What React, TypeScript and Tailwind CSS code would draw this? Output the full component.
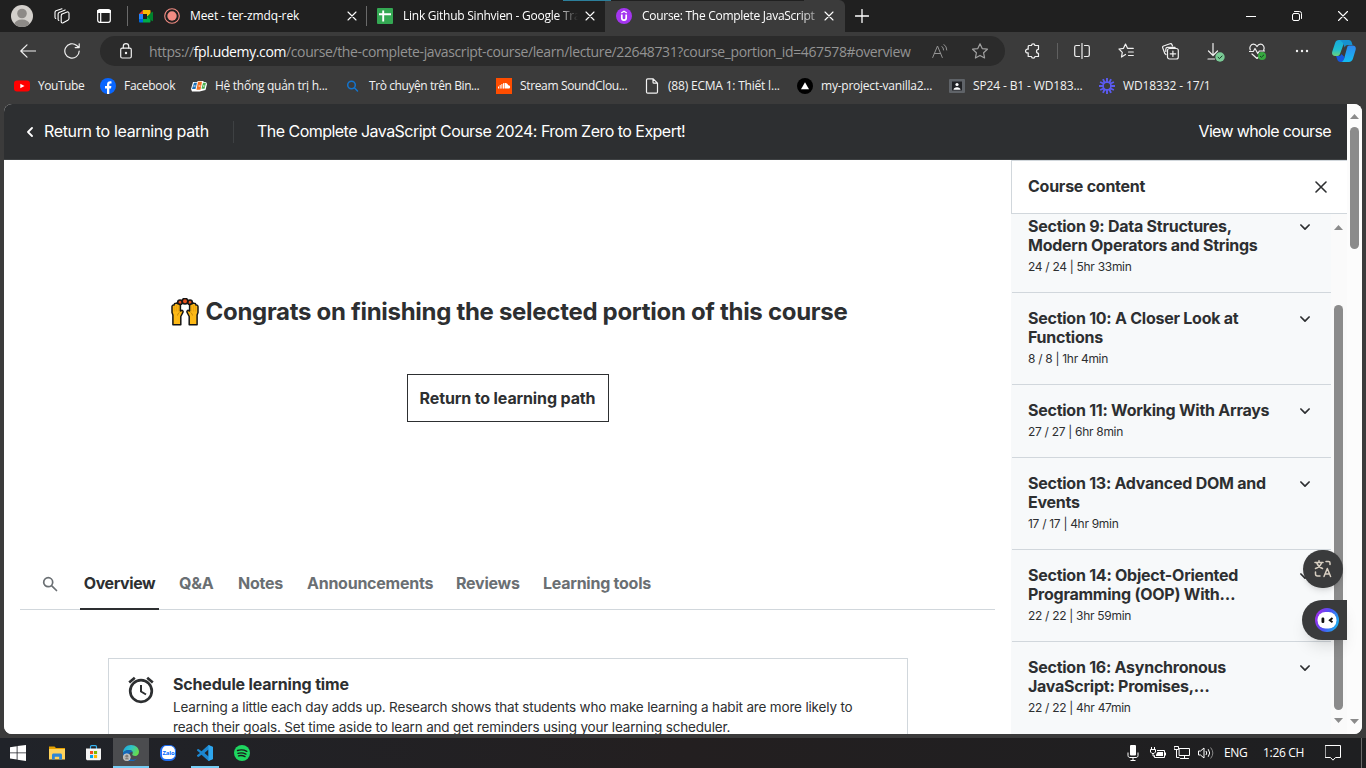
import React from "react";

type P = { children?: React.ReactNode; c?: string; w?: number; h?: number; sw?: number };

/* Stroked glyph in a 16 unit box, drawn at 16px unless told otherwise. */
function Line({ children, c = "", w = 16, h = 16, sw = 1 }: P) {
  return (
    <svg className={"shrink-0 " + c} width={w} height={h} viewBox={`0 0 ${w} ${h}`} fill="none" stroke="currentColor" strokeWidth={sw} strokeLinecap="round" strokeLinejoin="round">
      {children}
    </svg>
  );
}

function Solid({ children, c = "", w = 16, h = 16 }: P) {
  return (
    <svg className={"shrink-0 " + c} width={w} height={h} viewBox={`0 0 ${w} ${h}`}>
      {children}
    </svg>
  );
}

const Close = ({ c = "" }: { c?: string }) => (
  <Line w={10} h={10} c={c} sw={1.1}><path d="M1 1l8 8M9 1L1 9" /></Line>
);

function TabStrip() {
  return (
    <div className="relative flex h-8 shrink-0 items-center bg-[#202020] text-white">
      <Solid w={22} h={22} c="ml-[11px]">
        <defs><clipPath id="av"><circle cx="11" cy="11" r="11" /></clipPath></defs>
        <circle cx="11" cy="11" r="11" fill="#d3d0cc" />
        <g clipPath="url(#av)" fill="#8d8a87"><circle cx="11" cy="8.5" r="4.8" /><ellipse cx="11" cy="19" rx="7.6" ry="4.4" /></g>
      </Solid>
      <Line w={16} h={16} c="ml-[21px]" sw={1.1}>
        <path d="M7.5 6.2l5.6-2.2c1-.3 1.9.2 1.9 1.2v5.3c0 .8-.4 1.4-1.2 1.8l-4.6 2.5c-1 .5-2 0-2-1V7.900c0-.8.200-1.400.900-1.700z" />
        <path d="M4.800 12.500c-.5-.2-.7-.6-.7-1.200V6.200c0-.8.3-1.400 1-1.700l6-2.600" />
        <path d="M1.700 10.500c-.5-.2-.7-.6-.7-1.200V4.500c0-.8.3-1.400 1-1.700L8 .8" />
      </Line>
      <Line w={14} h={14} c="ml-[27px]" sw={1.2}>
        <rect x=".7" y=".7" width="12.600" height="12.600" rx="2" /><path d="M1 2.600h12" strokeWidth="3" /><path d="M3.700 4v9" />
      </Line>
      <div className="ml-4 h-5 w-px bg-[#6a6a6a]" />
      <Solid w={16} h={16} c="ml-[10px]">
        <path d="M1 6l4-4v4z" fill="#ea4335" /><path d="M5 2h6.500c.8 0 1 .4 1 1v4L9 9V6H5z" fill="#fbbc04" />
        <path d="M1 6h4v5H1z" fill="#2684fc" /><path d="M1 11h4v3.500H2.200C1.300 14.500 1 14 1 13.500z" fill="#0066da" />
        <path d="M5 11h4V8l3.500 2v3.500c0 .7-.3 1-1 1H5z" fill="#00ac47" /><path d="M9 8.500l5-4.500c.4-.3 1-.2 1 .4v8.200c0 .6-.5.700-1 .4z" fill="#00832d" />
        <path d="M5 6h4v5H5z" fill="#202020" />
      </Solid>
      <Solid w={16} h={16} c="ml-[10px]"><circle cx="8" cy="8" r="7.300" fill="none" stroke="#f28b82" strokeWidth="1.100" /><circle cx="8" cy="8" r="4.700" fill="#f28b82" /></Solid>
      <span className="ml-[10px] w-[157px] whitespace-nowrap text-xs tracking-[-0.13px]">Meet - ter-zmdq-rek</span>
      <Close />
      <div className="ml-[9px] h-5 w-px bg-[#6a6a6a]" />
      <Solid c="ml-[10px]"><rect width="16" height="16" rx="1" fill="#34a853" /><path d="M2 6.200h12M6.200 2.500v11" stroke="#fff" strokeWidth="1.900" /></Solid>
      <span className="ml-[10px] w-[175px] whitespace-nowrap text-xs tracking-[-0.25px] [mask-image:linear-gradient(to_right,black_88%,transparent)]">Link Github Sinhvien - Google Tra</span>
      <Close c="ml-[7px]" />
      <div className="ml-[10px] flex h-8 w-[240px] items-center rounded-tr-md bg-[#3b3b3b]">
        <Solid c="ml-[11px]"><circle cx="8" cy="8" r="8" fill="#a435f0" /><path d="M5.200 5L8 3.300 10.800 5" stroke="#fff" strokeWidth="1.300" fill="none" /><path d="M5.800 6.500v3.400a2.200 2.200 0 0 0 4.400 0V6.500" stroke="#fff" strokeWidth="1.700" fill="none" /></Solid>
        <span className="ml-[10px] w-[173px] whitespace-nowrap text-xs tracking-[-0.28px] [mask-image:linear-gradient(to_right,black_90%,#0007)]">Course: The Complete JavaScript</span>
        <Close c="ml-[9px]" />
      </div>
      <Line w={14} h={14} c="ml-[10px]" sw={1.300}><path d="M7 .5v13M.5 7h13" /></Line>
      <div className="ml-auto flex items-center pr-[18px]">
        <Line w={10} h={10}><path d="M0 5.500h10" /></Line>
        <Line w={10} h={10} c="ml-9"><rect x=".5" y="2.500" width="7" height="7" rx="1.500" /><path d="M2.500.5h5a2 2 0 0 1 2 2v5" /></Line>
        <Line w={10} h={10} c="ml-9" sw={1.100}><path d="M.5.5l9 9M9.500.5l-9 9" /></Line>
      </div>
      <div className="absolute left-[563px] top-0 h-px w-12 bg-[#2c7f9b]" />
      <div className="absolute left-[611px] top-0 h-px w-[193px] bg-[#202020]" />
    </div>
  );
}

function Toolbar() {
  return (
    <div className="flex h-9 shrink-0 items-center pt-0.5 text-[#f0f0f0]">
      <Line w={16} h={14} c="ml-5" sw={1.200}><path d="M15.500 7H.8M7 .8L.8 7 7 13.200" /></Line>
      <Line w={16} h={16} c="ml-7" sw={1.200}><path d="M15.200 8a7.200 7.200 0 1 1-2.500-5.500L14.600 4.200M15.200.8v3.800h-4" /></Line>
      <div className="ml-5 flex h-[30px] w-[905px] items-center rounded-full bg-[#2b2b2b]">
        <Line w={12} h={16} c="ml-5" sw={1.200}><rect x=".7" y="5.200" width="10.600" height="9.800" rx="1.500" /><path d="M3.300 5V3.300a2.700 2.700 0 0 1 5.400 0V5" /><circle cx="6" cy="10" r=".6" fill="currentColor" /></Line>
        <span className="ml-[17px] w-[766px] whitespace-nowrap text-[14px] tracking-[-0.38px] text-[#939393]">https://<span className="text-white">fpl.udemy.com</span>/course/the-complete-javascript-course/learn/lecture/22648731?course_portion_id=467578#overview</span>
        <Line w={16} h={16} c="ml-[17px] text-[#939393]"><path d="M.7 14.500L5.500 3l4.800 11.500M2.300 10.500h6.400M10 3.500q1.600 1.200 1.600 3.500M12 1.500q2.800 2 2.800 5.500" /></Line>
        <Line w={16} h={16} c="ml-6 text-[#a0a0a0]" sw={1.200}><path d="M8 .8l2.200 4.800 5.200.6-3.800 3.600 1 5.200L8 12.400 3.400 15l1-5.200L.6 6.200l5.200-.6z" /></Line>
      </div>
      <Line w={16} h={16} c="ml-[20px]" sw={1.200}><path d="M4.200 2.500h2.300a1.700 1.700 0 0 1 3.400 0h3.600v3.800a2 2 0 0 0 0 4v3.200H9.900a1.700 1.700 0 0 1-3.400 0H3.200v-3.700a1.900 1.900 0 1 1 0-3.500V3.500a1 1 0 0 1 1-1z" /></Line>
      <div className="ml-4 h-4 w-px bg-[#606060]" />
      <Line w={16} h={16} c="ml-4" sw={1.200}><path d="M5.500 2.500H2.200c-.8 0-1.500.6-1.500 1.400v8.200c0 .8.700 1.400 1.500 1.400h3.300M10.500 2.500h3.300c.8 0 1.500.6 1.500 1.400v8.200c0 .8-.7 1.400-1.500 1.400h-3.300M8 .5v15" /></Line>
      <Line w={16} h={16} c="ml-7" sw={1.200}><path d="M7.500 11.500L3.500 14l.8-4.700L1 6l4.500-.7L7.500 1l2 4.300h5.800M10.500 9h4.800M10.500 12.500h4.800" /></Line>
      <Line w={17} h={17} c="ml-7" sw={1.200}><path d="M4 11.500l-1.200-1L.7 4.800c-.3-.8.100-1.500.9-1.800L8 .8c.9-.3 1.700.1 2 .9l.5 1.300" /><path d="M3.800 8.500V6.200c0-1 .8-1.800 1.800-1.800h7.500" /><rect x="5.500" y="5.500" width="10.800" height="10.500" rx="2" /><path d="M10.900 8v5.500M8.200 10.800h5.500" /></Line>
      <div className="relative ml-7 h-[17px] w-4">
        <Line w={14} h={17} sw={1.200}><path d="M6 .5v12M1.500 8L6 12.500 10.500 8M1 16h6.500" /></Line>
        <Solid w={10} h={10} c="absolute left-[8px] top-[9px]"><circle cx="5" cy="5" r="4.700" fill="#7acb96" /><path d="M2.800 5l1.700 1.600L7.400 3.700" stroke="#173d25" fill="none" /></Solid>
      </div>
      <div className="relative ml-[26px] h-4 w-[18px]">
        <Line w={16} h={16} sw={1.200}><path d="M1.300 7C0 4 2 1.200 4.500 1.200 6.500 1.200 7.500 2.600 8 3.500c.5-.9 1.500-2.300 3.500-2.300C14 1.200 16 4 14.700 7M.5 8.500h3.800L6 5.500l2.800 5 1.500-2.500h5.200M3 11l5 4.500 1.500-1.500" /></Line>
        <Solid w={8} h={8} c="absolute left-[9px] top-[9px]"><circle cx="4" cy="4" r="4" fill="#37a83f" /><path d="M2 4l1.400 1.300L6 2.800" stroke="#173d25" fill="none" /></Solid>
      </div>
      <Solid w={14} h={4} c="ml-7"><g fill="#f3f3f3"><circle cx="2" cy="2" r="1.200" /><circle cx="7" cy="2" r="1.200" /><circle cx="12" cy="2" r="1.200" /></g></Solid>
      <Solid w={24} h={22} c="ml-[23px]">
        <defs>
          <linearGradient id="cp1" x1="0" y1="0" x2="0" y2="1"><stop offset="0" stopColor="#17a9dc" /><stop offset=".6" stopColor="#1fbfd0" /><stop offset="1" stopColor="#6bd37a" /></linearGradient>
          <linearGradient id="cp2" x1="0" y1="0" x2="0" y2="1"><stop offset="0" stopColor="#2f86ee" /><stop offset="1" stopColor="#12bdf0" /></linearGradient>
        </defs>
        <path d="M7 0h9l-4 3-4 11c-.5 1.300-1.300 2-2.500 2H3c-2.500 0-3.500-2-2.700-4.500L3 3.200C3.700 1.200 5 0 7 0z" fill="url(#cp1)" />
        <path d="M8 0h9c1.500 0 2.300 1 2.800 2.500L20.500 5H16c-2 0-2.700.8-3.300 2.500L11 3z" fill="#1791cf" />
        <path d="M17 5.500h3.500c2.700 0 3.800 2 3.100 4.500L21 18.500c-.7 2.200-2 3.500-4.200 3.500H8l4-3 3-11c.4-1.700 1-2.500 2-2.500z" fill="url(#cp2)" />
        <path d="M4 16h3c1.500 0 2-.8 2.500-2l3 3-1 3c-.5 1.500-1.600 2-3 2-1.800 0-2.700-1-3.200-2.500z" fill="#1557dd" />
      </Solid>
    </div>
  );
}

function Bookmark({ icon, text, w }: { icon: React.ReactNode; text: string; w: string }) {
  return (
    <div className="flex items-center gap-2">
      <span className="flex w-4 justify-center">{icon}</span>
      <span className={"whitespace-nowrap " + w}>{text}</span>
    </div>
  );
}

function Bookmarks() {
  return (
    <div className="flex h-9 shrink-0 items-center gap-4 pl-[14px] text-xs text-[#f2f2f2]">
      <Bookmark w="w-[46px] tracking-[-0.45px]" text="YouTube" icon={<Solid><rect y="2.500" width="16" height="11" rx="3" fill="#f00" /><path d="M6.300 5.700l4.200 2.300-4.200 2.300z" fill="#fff" /></Solid>} />
      <Bookmark w="w-[51px] tracking-[-0.28px]" text="Facebook" icon={<Solid><circle cx="8" cy="8" r="8" fill="#0866ff" /><path d="M7 16v-5.500H5V8h2V6.800C7 4.300 8.200 3.200 10.300 3.200c.5 0 .9.100 1.200.2v2.200h-1c-.9 0-1.200.4-1.200 1.300V8h2.100l-.4 2.500H9.300V16z" fill="#fff" /></Solid>} />
      <Bookmark w="w-[114px] tracking-[-0.28px]" text="Hệ thống quản trị h..." icon={<Solid><path d="M2 4h4l1-1h5l1 1h2l1 2-1.500 6-6 1.500H1L0 11z" fill="#fff" /><path d="M3 4.800h3L4.500 11H1z" fill="#1b70b8" /><path d="M7 3.800h4l-1.500 8H5.500z" fill="#f37021" /><path d="M12 4.800h3l-1.500 6H10.500z" fill="#4caf50" /><path d="M2.500 8h2M7.500 8h2M12 8h1.500" stroke="#fff" /></Solid>} />
      <Bookmark w="w-[111px] tracking-[-0.42px]" text="Trò chuyện trên Bin..." icon={<Line sw={1.500} c="text-[#1474cc]"><circle cx="6.500" cy="7" r="3.800" /><path d="M9.400 9.800L12.500 13" /></Line>} />
      <Bookmark w="w-[108px] tracking-[-0.35px]" text="Stream SoundClou..." icon={<Solid><rect width="16" height="16" fill="#ff4d00" /><path d="M2.500 8.500v2M4.200 7v3.600M5.900 6v4.600M7.500 5.200v5.400" stroke="#fff" /><path d="M8.500 5c2-.5 3.500.6 3.600 2.300 1.300-.2 2 .7 2 1.600 0 1-.7 1.700-1.600 1.700h-4z" fill="#fff" /></Solid>} />
      <Bookmark w="w-[113px] tracking-[-0.2px]" text="(88) ECMA 1: Thiết l..." icon={<Line sw={1.200} c="-ml-px"><path d="M2.500 2c0-.7.500-1.200 1.200-1.200h5.500l4.300 4.300v8.900c0 .7-.5 1.200-1.200 1.200H3.700c-.7 0-1.200-.5-1.200-1.200zM9 .8v3.400c0 .6.4 1 1 1h3.500" /></Line>} />
      <Bookmark w="w-[112px] tracking-[-0.23px]" text="my-project-vanilla2..." icon={<Solid><circle cx="8" cy="8" r="8" fill="#000" /><path d="M8 4.200l4 7H4z" fill="#fff" /></Solid>} />
      <Bookmark w="w-[110px] tracking-[-0.13px]" text="SP24 - B1 - WD183..." icon={<Solid><rect y="1" width="16" height="14" rx="1" fill="#5f6368" /><rect x="3" y="3.500" width="10" height="9" fill="#202124" /><circle cx="8" cy="6.500" r="1.600" fill="#fff" /><path d="M4.500 11.800c0-1.800 1.500-2.600 3.500-2.600s3.500.8 3.500 2.600z" fill="#fff" /></Solid>} />
      <Bookmark w="w-[90px] tracking-[-0.12px]" text="WD18332 - 17/1" icon={<Solid><g stroke="#5b5bf0" strokeWidth="1.900"><path d="M8 0v5M8 11v5M0 8h5M11 8h5M4 1.100l2 4.300M10 10.600l2 4.300M1.100 4l4.300 2M10.600 10l4.300 2M12 1.100l-2 4.300M6 10.600l-2 4.300M14.900 4l-4.300 2M5.400 10l-4.300 2" /></g><circle cx="8" cy="8" r="4" fill="none" stroke="#5b5bf0" strokeWidth="1.600" /></Solid>} />
    </div>
  );
}

const Arrow = ({ down = false, c = "" }: { down?: boolean; c?: string }) => (
  <Solid w={9} h={5} c={c}><path d={down ? "M0 0h9L4.500 5z" : "M0 5h9L4.500 0z"} fill="#8b8b8b" /></Solid>
);

function Header() {
  return (
    <header className="flex h-14 shrink-0 items-center border-b border-[#3e4143] bg-[#2d2f31] text-base text-white">
      <Line w={8} h={10} c="ml-[22px]" sw={1.800}><path d="M6 1L2 5l4 4" /></Line>
      <span className="ml-[10px] w-[189px] whitespace-nowrap pb-0.5 tracking-[-0.35px]">Return to learning path</span>
      <div className="h-[22px] w-px bg-[#3e4143]" />
      <span className="ml-[23px] whitespace-nowrap pb-0.5 tracking-[-0.53px]">The Complete JavaScript Course 2024: From Zero to Expert!</span>
      <span className="ml-auto mr-4 whitespace-nowrap pb-0.5 tracking-[-0.64px]">View whole course</span>
    </header>
  );
}

const tabs = [
  { t: "Q&A", w: "w-[35px]" },
  { t: "Notes", w: "w-[45px]" },
  { t: "Announcements", w: "w-[125px]" },
  { t: "Reviews", w: "w-[63px]" },
  { t: "Learning tools", w: "w-[109px]" },
];

function RaisedHands() {
  const hand = (
    <>
      <path d="M1.900 26.800V17L1 14.500V8.500Q1.300 6.700 3 7Q3.300 5.200 5 5.300Q6.500 4.700 7.300 6Q9.300 5.800 9.400 8V13L11.200 12.300Q12.800 13.200 11.600 15L9.800 18.500V26.800z" fill="#fdb916" stroke="#151515" strokeWidth="1.500" strokeLinejoin="round" />
      <path d="M3.300 8v5.500M5.300 7v6.500M7.300 7.500v6" stroke="#e39a0c" strokeWidth=".7" /><path d="M8.500 14.500q-1.800.8-2 3" stroke="#b97800" strokeWidth=".8" fill="none" />
    </>
  );
  return (
    <Solid w={28} h={28}>
      <g fill="#e8501c" stroke="#151515" strokeWidth="1.600"><circle cx="9" cy="4.300" r="2.300" /><circle cx="19" cy="4.300" r="2.300" /><circle cx="14" cy="3.200" r="2.800" /></g>
      <g>{hand}</g><g transform="translate(28 0) scale(-1 1)">{hand}</g>
    </Solid>
  );
}

function Main() {
  return (
    <main className="flex w-[1007px] shrink-0 flex-col overflow-hidden bg-white text-[#2d2f31]">
      <div className="flex h-[398px] shrink-0 flex-col items-center pt-[137px]">
        <h1 className="flex h-[30px] items-center whitespace-nowrap pl-[3px] text-2xl font-bold tracking-[-0.3px]">
          <RaisedHands /><span className="ml-[7px]">Congrats on finishing the selected portion of this course</span>
        </h1>
        <button className="mt-[47px] flex h-12 w-[202px] shrink-0 items-center justify-center whitespace-nowrap border border-[#2d2f31] text-base font-bold tracking-[-0.13px]">Return to learning path</button>
      </div>
      <nav className="mx-4 flex h-[52px] shrink-0 items-stretch gap-6 border-b border-[#d1d7dc] pl-[22px] text-base font-bold tracking-[-0.25px] text-[#6a6f73]">
        <div className="-mr-2 flex w-[22px] items-center"><Line w={16} h={16} sw={1.700}><circle cx="6.200" cy="6.200" r="4.500" /><path d="M9.800 9.800l4.700 4.700" /></Line></div>
        <div className="-mb-px -mr-1 flex w-[79px] items-center justify-center border-b-2 border-[#2d2f31] pb-px tracking-[-0.4px] text-[#2d2f31]">Overview</div>
        {tabs.map(({ t, w }) => <div key={t} className={"flex items-center whitespace-nowrap pb-0.5 " + w}>{t}</div>)}
      </nav>
      <section className="ml-[104px] mt-12 flex h-[160px] w-[800px] shrink-0 border border-[#d1d7dc] pl-[19px] pt-4">
        <Line w={28} h={30} sw={2.700}><circle cx="13" cy="16" r="10.800" /><path d="M13 10v6.500l5 3" strokeWidth="2" strokeLinecap="butt" /><path d="M1.200 7.500l5.600-4.700M24.800 7.500l-5.600-4.700" strokeLinecap="butt" /></Line>
        <div className="ml-[17px] whitespace-nowrap">
          <h2 className="h-[22px] text-base font-bold leading-[18px] tracking-[-0.17px]">Schedule learning time</h2>
          <p className="text-[13.5px] leading-5 tracking-[-0.17px]">Learning a little each day adds up. Research shows that students who make learning a habit are more likely to<br />reach their goals. Set time aside to learn and get reminders using your learning scheduler.</p>
        </div>
      </section>
    </main>
  );
}

const sections = [
  { t: ["Section 9: Data Structures,", "Modern Operators and Strings"], m: "24 / 24 | 5hr 33min" },
  { t: ["Section 10: A Closer Look at", "Functions"], m: "8 / 8 | 1hr 4min" },
  { t: ["Section 11: Working With Arrays"], m: "27 / 27 | 6hr 8min" },
  { t: ["Section 13: Advanced DOM and", "Events"], m: "17 / 17 | 4hr 9min" },
  { t: ["Section 14: Object-Oriented", "Programming (OOP) With…"], m: "22 / 22 | 3hr 59min" },
  { t: ["Section 16: Asynchronous", "JavaScript: Promises,…"], m: "22 / 22 | 4hr 47min" },
];

function Sidebar() {
  return (
    <aside className="flex min-w-0 flex-1 flex-col text-[#2d2f31]">
      <div className="flex h-[54px] shrink-0 items-center border border-r-0 border-[#d1d7dc] bg-white pl-4 pr-5">
        <h2 className="pb-0.5 text-base font-bold tracking-[-0.25px]">Course content</h2>
        <Line w={12} h={12} c="ml-auto" sw={1.600}><path d="M1 1l10 10M11 1L1 11" /></Line>
      </div>
      <div className="flex min-h-0 flex-1">
        <div className="w-80 overflow-hidden bg-[#f7f9fa]">
          <div className="-mt-[13px]">
            {sections.map((s) => (
              <div key={s.m} className={"ml-px flex border-b border-[#d1d7dc] pl-4 pr-[21px] pt-4 last:border-b-0 " + (s.t.length > 1 ? "h-[92px]" : "h-[73px]")}>
                <div className="flex-1 whitespace-nowrap">
                  <h3 className="text-base font-bold leading-[19.2px] tracking-[-0.25px]">{s.t.map((l) => <div key={l}>{l}</div>)}</h3>
                  <p className="pt-1 text-xs leading-[16.8px] tracking-[-0.3px]">{s.m}</p>
                </div>
                <Line w={10} h={8} c="mt-[7px]" sw={1.700}><path d="M.9 1L5 5.100 9.100 1" /></Line>
              </div>
            ))}
          </div>
        </div>
        <div className="flex w-4 flex-col items-start bg-[#fafafa] pl-[3px] pt-[11px]">
          <Arrow />
          <div className="mt-[75px] h-[405px] w-[9px] rounded-full bg-[#8b8b8b]" />
          <Arrow down c="mt-2" />
        </div>
      </div>
    </aside>
  );
}

function Taskbar() {
  return (
    <div className="flex h-[30px] shrink-0 items-center bg-linear-to-r from-[#202329] via-[#231f20] to-[#1e1f21] text-xs text-white">
      <Solid c="ml-[10px]"><path d="M0 2.200l6.700-1v6.300H0zM7.500 1L16 0v7.500H7.500zM0 8.300h6.700v6.300l-6.700-1zM7.500 8.300H16V16l-8.500-1.200z" fill="#fff" /></Solid>
      <Solid c="ml-[23px]"><path d="M0 1.500h5.500L7 3h9v5H0z" fill="#e5a100" /><path d="M0 4h16v10.500H0z" fill="#ffd35c" /><path d="M3 14.500V10c0-1 .6-1.600 1.600-1.600h6.800c1 0 1.600.6 1.600 1.600v4.500h-2.800v-2.700H5.800v2.700z" fill="#2f86d6" /></Solid>
      <Solid w={15} h={16} c="ml-[21px]"><path d="M4.500 4V1.700C4.500 1 5 .7 5.500.7h4c.6 0 1 .3 1 1V4" stroke="#35b2ef" strokeWidth="1.200" fill="none" /><path d="M0 3.500h15v10c0 1-.7 1.800-1.800 1.800H1.800C.7 15.300 0 14.500 0 13.500z" fill="#f4f4f4" /><path d="M4 6h3.100v3.100H4z" fill="#f25022" /><path d="M8 6h3.100v3.100H8z" fill="#7fba00" /><path d="M4 10h3.100v3.100H4z" fill="#00a4ef" /><path d="M8 10h3.100v3.100H8z" fill="#ffb900" /></Solid>
      <div className="ml-3 flex h-[30px] w-9 items-center justify-center border-b-2 border-[#76cdf5] bg-[#4b4c4f] pt-0.5">
        <Solid>
          <defs><linearGradient id="ed" x1="0" y1="0" x2="1" y2=".5"><stop offset="0" stopColor="#1c9de0" /><stop offset=".5" stopColor="#2fc4c9" /><stop offset="1" stopColor="#64dc50" /></linearGradient></defs>
          <path d="M0 8C0 3.500 3.500 0 8 0c4.800 0 8 3.200 8 6.800 0 2.600-1.700 4.200-3.800 4.200-1.700 0-3-.6-3-1.400 0-.5.600-.8.600-1.800C9.800 6.300 8.200 5 6 5 3 5 .8 6.500 0 8z" fill="url(#ed)" />
          <path d="M0 8C.8 6 3 5 6 5c1.800 0 3.200.9 3.600 2-1.900-.3-4 1-4 3.700 0 2.300 2 4 4.600 4 1.600 0 3-.5 4-1.400A8 8 0 0 1 0 8z" fill="#1567b8" />
          <circle cx="3.800" cy="12.200" r="3.500" fill="#b5b3b0" stroke="#e4e2df" strokeWidth=".6" /><circle cx="3.800" cy="11.200" r="1.400" fill="#807d7a" /><path d="M1.500 14.200q2.300-3 4.600 0z" fill="#807d7a" />
        </Solid>
      </div>
      <div className="ml-[11px] flex size-4 items-center justify-center rounded-[6px] border border-b-2 border-l-2 border-[#1d6cf2] bg-white text-[6px] font-bold leading-none tracking-[-0.2px] text-[#0068ff]">Zalo</div>
      <div className="ml-[15px] flex h-[30px] w-7 items-center justify-center border-b-2 border-[#76cdf5] pt-0.5">
        <Solid><path d="M11.500 0L16 2v12l-4.500 2-7-6.200L1.500 12 0 11.200v-1L3 8 0 5.500v-1L1.500 4l3 2.300zM11.500 4.500L7.500 8l4 3.500z" fill="#1c86cf" fillRule="evenodd" /><path d="M11.500 0L16 2v12l-4.500 2z" fill="#2ea6ee" /></Solid>
      </div>
      <Solid c="ml-[15px]"><circle cx="8" cy="8" r="8" fill="#1ed760" /><path d="M3.500 5.500q5-1.500 9.300.8M4 8.300q4.200-1.200 7.900.8M4.500 10.900q3.500-.9 6.500.7" stroke="#1b1b1b" strokeWidth="1.400" strokeLinecap="round" fill="none" /></Solid>
      <div className="ml-auto flex h-full items-center">
        <Solid w={12} h={16}><rect x="3" y="0" width="6" height="10.500" rx="1" fill="#fff" /><path d="M1 7.500v3c0 1.200.8 2 2 2h6c1.200 0 2-.8 2-2v-3M6 12.500v3M3.500 15.500h5" stroke="#fff" fill="none" /></Solid>
        <Solid w={16} h={14} c="ml-[11px]"><path d="M1.500 1v2M4.500 1v2M.5 3.500h5V6L4 7.500H2L.5 6zM3 7.500V10h2" stroke="#fff" fill="none" /><path d="M7 4.500h7.500v7H4.500V9.500" stroke="#fff" fill="none" /><path d="M7.500 6h5.500v4H6V8.500z" fill="#fff" /><path d="M15.500 6.500v3" stroke="#fff" /></Solid>
        <Line w={16} h={14} c="ml-2"><path d="M5.500 2.500h10v7h-10zM10.500 9.500v3M6.500 12.500h8M.5.500h4v3h-4zM2.500 3.500v8H5" /></Line>
        <Solid w={17} h={14} c="ml-2"><path d="M.5 5h2L6 2v10L2.500 9h-2zM8 5q1.500 2 0 4M10.200 3.200q3 3.800 0 7.600" stroke="#fff" fill="none" /><path d="M12.600 1.500q4.500 5.500 0 11" stroke="#8a8a8a" fill="none" /></Solid>
        <span className="ml-[9px] w-[23px] whitespace-nowrap tracking-[-0.3px]">ENG</span>
        <span className="ml-4 w-[41px] whitespace-nowrap tracking-[-0.3px]">1:26 CH</span>
        <Line w={16} h={16} c="ml-[21px]"><path d="M.5.500h15v12h-5L8 15.200l-2.500-2.700h-5z" /></Line>
        <div className="ml-5 mr-1 h-full w-px bg-[#6a6a6a]" />
      </div>
    </div>
  );
}

export default function App() {
  return (
    <div className="flex h-[768px] w-[1366px] flex-col overflow-hidden bg-[#3b3b3b] font-['Open_Sans','Noto_Sans',sans-serif]">
      <TabStrip />
      <Toolbar />
      <Bookmarks />
      <div className="relative mx-1 mb-1 flex h-[630px] shrink-0 overflow-hidden rounded-lg bg-white font-['Inter',sans-serif]">
        <div className="flex w-[1343px] flex-col">
          <Header />
          <div className="flex min-h-0 flex-1"><Main /><Sidebar /></div>
        </div>
        <div className="flex w-[15px] flex-col items-center bg-[#fcfcfc] pt-[10px]">
          <Arrow />
          <div className="mt-2 h-[122px] w-[9px] rounded-full bg-[#8b8b8b]" />
          <Arrow down c="mb-[10px] mt-auto" />
        </div>
        <div className="absolute left-[1299px] top-[446px] flex h-[38px] w-10 items-center justify-center rounded-full bg-[#3a3b3c] text-[#d8cfc2] shadow-md">
          <Line w={18} h={18} sw={1.500}><path d="M1 2.500h8M5 .8v1.500M7.500 3q-1.500 4-6 5.500M2.800 3q1.500 4 5.700 5.500M12 1.500h2.500c.9 0 1.500.6 1.500 1.500v1.500M1.500 12v2c0 1.200.8 2 2 2H6M10 16.500l3.300-8 3.300 8M11.200 14h4.200" /></Line>
        </div>
        <div className="absolute left-[1298px] top-[496px] flex h-10 w-[45px] items-center rounded-l-full bg-[#3a3b3c] pl-[13px] shadow-lg">
          <Solid w={24} h={24}>
            <defs><linearGradient id="bot" x1="0" y1=".3" x2="1" y2=".7"><stop offset="0" stopColor="#a12bea" /><stop offset=".5" stopColor="#4a55f5" /><stop offset="1" stopColor="#18b5ee" /></linearGradient></defs>
            <circle cx="12" cy="12" r="12" fill="url(#bot)" /><rect x="2.500" y="4" width="19" height="16.500" rx="8" fill="#fff" /><rect x="6.500" y="9.500" width="2.800" height="5.500" rx="1.200" fill="#111" /><path d="M17.500 10l-2.700 2.300 2.700 2" stroke="#111" strokeWidth="1.900" fill="none" />
          </Solid>
        </div>
      </div>
      <Taskbar />
    </div>
  );
}
